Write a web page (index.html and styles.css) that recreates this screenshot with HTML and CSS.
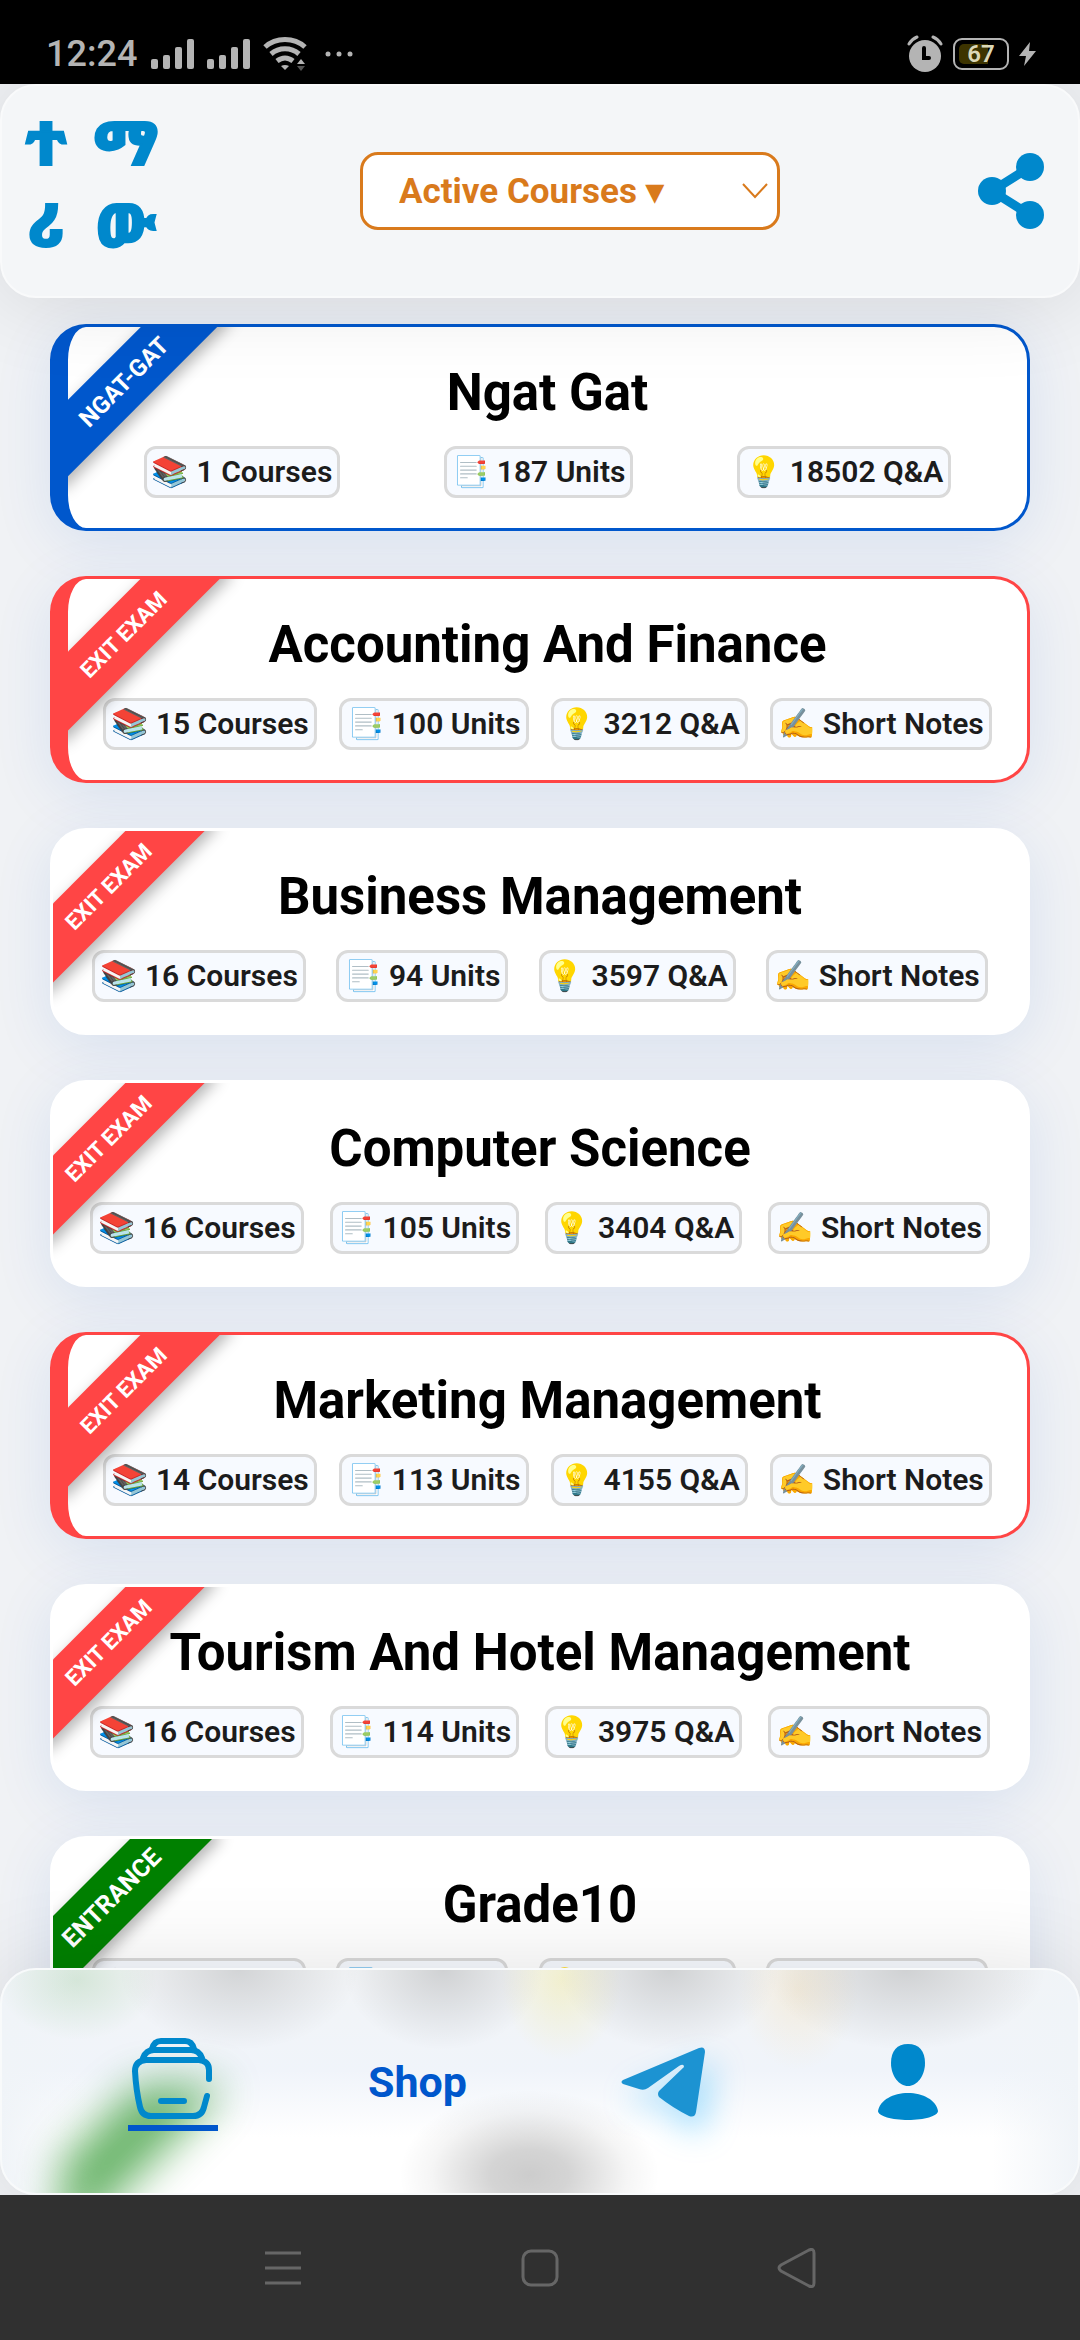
FILE: index.html
```html
<!DOCTYPE html>
<html lang="en">
<head>
    <meta charset="UTF-8">
    <meta name="viewport" content="width=device-width, initial-scale=1.0">
    <title>Courses</title>
    <link rel="stylesheet" href="styles.css">
</head>
<body>
    <div class="status-bar">
        <div class="status-group">
            <span class="clock">12:24</span>
            <svg class="signal" width="44" height="30" viewBox="0 0 44 30" fill="currentColor">
                <rect x="0" y="20" width="7" height="10" rx="2"/>
                <rect x="12" y="16" width="7" height="14" rx="2"/>
                <rect x="24" y="8" width="7" height="22" rx="2"/>
                <rect x="36" y="0" width="7" height="30" rx="2"/>
            </svg>
            <svg class="signal" width="44" height="30" viewBox="0 0 44 30" fill="currentColor">
                <rect x="0" y="20" width="7" height="10" rx="2"/>
                <rect x="12" y="16" width="7" height="14" rx="2"/>
                <rect x="24" y="8" width="7" height="22" rx="2"/>
                <rect x="36" y="0" width="7" height="30" rx="2"/>
            </svg>
            <svg class="wifi" width="44" height="34" viewBox="0 0 44 34" fill="none" stroke="currentColor" stroke-width="5">
                <path d="M2 10C13 0 31 0 42 10"/>
                <path d="M8 17C16 10 28 10 36 17"/>
                <path d="M14 24C19 20 25 20 30 24"/>
                <path d="M18 29Q22 27 26 29L22 33Z" fill="currentColor" stroke="none"/>
                <path d="M34 27L38 22L42 27Z" fill="currentColor" stroke="none"/>
                <path d="M34 29L38 34L42 29Z" fill="#555" stroke="none"/>
            </svg>
            <svg class="dots" width="28" height="6" viewBox="0 0 28 6" fill="currentColor">
                <circle cx="3" cy="3" r="2.5"/><circle cx="14" cy="3" r="2.5"/><circle cx="25" cy="3" r="2.5"/>
            </svg>
        </div>
        <div class="status-group status-right">
            <svg width="36" height="38" viewBox="0 0 36 38" fill="none" stroke="currentColor" stroke-width="3" stroke-linecap="round">
                <circle cx="18" cy="21" r="16" fill="currentColor" stroke="none"/>
                <path d="M2 9Q5 4 10 2M26 2Q31 4 34 9"/>
                <path d="M17 13V23H22" stroke="#000" stroke-width="4"/>
            </svg>
            <span class="battery"><span class="battery-level">67</span></span>
            <svg class="bolt" width="17" height="24" viewBox="0 0 17 24" fill="currentColor">
                <path d="M11 0L0 14H7L5 24L17 9H10Z"/>
            </svg>
        </div>
    </div>

    <div class="app">
        <header class="header">
            <a class="logo" href="#" lang="am">
                <span>ተ</span><span>ማ</span>
                <span>ሪ</span><span>ው</span>
            </a>
            <div class="filter">
                <select class="filter-select" aria-label="Course filter">
                    <option>Active Courses ▾</option>
                </select>
                <svg class="filter-arrow" width="26" height="16" viewBox="0 0 26 16" fill="none" stroke="currentColor" stroke-width="2">
                    <path d="M1 1L13 14L25 1"/>
                </svg>
            </div>
            <button class="share" type="button" aria-label="Share">
                <svg width="66" height="76" viewBox="0 0 66 76" fill="currentColor">
                    <path d="M52 14L14 38L52 62" fill="none" stroke="currentColor" stroke-width="9"/>
                    <circle cx="52" cy="14" r="14"/>
                    <circle cx="14" cy="38" r="14"/>
                    <circle cx="52" cy="62" r="14"/>
                </svg>
            </button>
        </header>

        <main class="courses">
            <section class="card owned ngat">
                <div class="ribbon">NGAT-GAT</div>
                <h2>Ngat Gat</h2>
                <div class="stats">
                    <span>📚 1 Courses</span>
                    <span>📑 187 Units</span>
                    <span>💡 18502 Q&amp;A</span>
                </div>
            </section>
            <section class="card owned exit">
                <div class="ribbon">EXIT EXAM</div>
                <h2>Accounting And Finance</h2>
                <div class="stats">
                    <span>📚 15 Courses</span>
                    <span>📑 100 Units</span>
                    <span>💡 3212 Q&amp;A</span>
                    <span>✍️ Short Notes</span>
                </div>
            </section>
            <section class="card exit">
                <div class="ribbon">EXIT EXAM</div>
                <h2>Business Management</h2>
                <div class="stats">
                    <span>📚 16 Courses</span>
                    <span>📑 94 Units</span>
                    <span>💡 3597 Q&amp;A</span>
                    <span>✍️ Short Notes</span>
                </div>
            </section>
            <section class="card exit">
                <div class="ribbon">EXIT EXAM</div>
                <h2>Computer Science</h2>
                <div class="stats">
                    <span>📚 16 Courses</span>
                    <span>📑 105 Units</span>
                    <span>💡 3404 Q&amp;A</span>
                    <span>✍️ Short Notes</span>
                </div>
            </section>
            <section class="card owned exit">
                <div class="ribbon">EXIT EXAM</div>
                <h2>Marketing Management</h2>
                <div class="stats">
                    <span>📚 14 Courses</span>
                    <span>📑 113 Units</span>
                    <span>💡 4155 Q&amp;A</span>
                    <span>✍️ Short Notes</span>
                </div>
            </section>
            <section class="card exit">
                <div class="ribbon">EXIT EXAM</div>
                <h2>Tourism And Hotel Management</h2>
                <div class="stats">
                    <span>📚 16 Courses</span>
                    <span>📑 114 Units</span>
                    <span>💡 3975 Q&amp;A</span>
                    <span>✍️ Short Notes</span>
                </div>
            </section>
            <section class="card entrance">
                <div class="ribbon">ENTRANCE</div>
                <h2>Grade10</h2>
                <div class="stats">
                    <span>📚 12 Courses</span>
                    <span>📑 84 Units</span>
                    <span>💡 3120 Q&amp;A</span>
                    <span>✍️ Short Notes</span>
                </div>
            </section>
        </main>

        <nav class="bottom-nav">
            <a class="active" href="#" aria-label="My courses">
                <svg width="82" height="82" viewBox="0 0 82 82" fill="none" stroke="currentColor" stroke-width="6" stroke-linecap="round" stroke-linejoin="round">
                    <path d="M77 41V32Q77 23 67 22H14Q3 23 3 33Q4 52 8 69Q10 78 19 78H61Q70 78 72 69L75 58"/>
                    <path d="M11 20Q14 12 22 12H59Q67 12 70 20"/>
                    <path d="M20 11Q22 3 29 3H53Q60 3 62 11"/>
                    <path d="M29 63H52"/>
                </svg>
            </a>
            <a class="shop" href="#">Shop</a>
            <a class="telegram" href="#" aria-label="Telegram">
                <svg width="84" height="70" viewBox="0 0 84 70" fill="currentColor">
                    <path d="M2 33L78 1Q84 -1 84 5L75 65Q74 71 68 69Q52 61 38 50Q36 47 38 44L63 20Q63 16 58 19L27 41Q23 44 18 42L2 37Q-1 35 2 33Z"/>
                </svg>
            </a>
            <a href="#" aria-label="Profile">
                <svg width="60" height="76" viewBox="0 0 60 76" fill="currentColor">
                    <path d="M30 0C41 0 47 7 47 19C47 32 39 42 30 42C21 42 13 32 13 19C13 7 19 0 30 0Z"/>
                    <path d="M0 67C2 56 15 49 30 49C45 49 58 56 60 67C60 72 46 76 30 76C14 76 0 72 0 67Z"/>
                </svg>
            </a>
        </nav>
    </div>

    <div class="system-nav">
        <button type="button" aria-label="Recent apps">
            <svg width="40" height="40" viewBox="0 0 40 40" fill="none" stroke="currentColor" stroke-width="3">
                <path d="M2 5H38M2 20H38M2 35H38"/>
            </svg>
        </button>
        <button type="button" aria-label="Home">
            <svg width="40" height="40" viewBox="0 0 40 40" fill="none" stroke="currentColor" stroke-width="3">
                <rect x="3" y="3" width="34" height="34" rx="8"/>
            </svg>
        </button>
        <button type="button" aria-label="Back">
            <svg width="40" height="40" viewBox="0 0 40 40" fill="none" stroke="currentColor" stroke-width="3">
                <path d="M4 17L32 2Q37 0 37 5V35Q37 40 32 38L4 23Q0 20 4 17Z"/>
            </svg>
        </button>
    </div>
</body>
</html>
```

FILE: styles.css
```css
* {
    box-sizing: border-box;
}
body {
    margin: 0;
    height: 100vh;
    display: flex;
    flex-direction: column;
    overflow: hidden;
    font-family: Roboto, "Noto Sans", "Noto Color Emoji", sans-serif;
    background-color: #f0f2f5;
}
svg {
    display: block;
}
button {
    border: none;
    padding: 0;
    background: none;
    color: inherit;
    cursor: pointer;
}
a {
    color: inherit;
    text-decoration: none;
}

/* phone status bar */
.status-bar {
    display: flex;
    justify-content: space-between;
    height: 84px;
    padding: 24px 44px 0 46px;
    background-color: #000;
    color: #b4b4b4;
}
.status-group {
    display: flex;
    align-items: center;
    gap: 12px;
    height: 60px;
}
.clock {
    margin-right: 2px;
    font-size: 36px;
    font-weight: 500;
}
.dots {
    margin-left: 6px;
}
.status-right {
    gap: 10px;
}
.battery {
    width: 56px;
    height: 32px;
    padding: 4px;
    border: 2px solid #b4b4b4;
    border-radius: 9px;
}
.battery-level {
    display: block;
    height: 20px;
    border-radius: 5px;
    background: linear-gradient(to right, #3d3400 67%, transparent 67%);
    color: #dcd8b8;
    font-size: 24px;
    font-weight: 600;
    line-height: 20px;
    text-align: center;
}

.app {
    position: relative;
    flex: 1;
    min-height: 0;
    overflow: hidden;
}
.header {
    position: relative;
    z-index: 2;
    display: flex;
    align-items: center;
    justify-content: space-between;
    height: 214px;
    padding: 0 34px 0 24px;
    border: 2px solid #f9fafb;
    border-radius: 36px;
    background-color: #f4f6f8;
    box-shadow: 0 0 90px rgba(0, 0, 0, 0.12);
    color: #0088cc;
}
.logo {
    display: grid;
    grid-template-columns: 40px 72px;
    column-gap: 24px;
    padding-bottom: 16px;
    font-family: "Noto Sans Ethiopic", "Noto Serif Ethiopic", "Abyssinica SIL", "Noto Sans", sans-serif;
    font-size: 60px;
    font-weight: 900;
    line-height: 82px;
    -webkit-text-stroke: 2px #0088cc;
}
.logo span {
    display: flex;
    justify-content: center;
}
.filter {
    position: relative;
    color: #d97a1c;
}
.filter-select {
    appearance: none;
    width: 420px;
    height: 78px;
    padding: 0 36px;
    border: 3px solid #d97a1c;
    border-radius: 18px;
    background-color: #fff;
    color: inherit;
    font-family: inherit;
    font-size: 35px;
    font-weight: 700;
}
.filter-arrow {
    position: absolute;
    top: 31px;
    right: 12px;
    pointer-events: none;
}

.courses {
    display: flex;
    flex-direction: column;
    gap: 45px;
    padding: 26px 50px;
}
.card {
    position: relative;
    flex-shrink: 0;
    overflow: hidden;
    padding: 36px 24px 30px;
    border: 3px solid #fff;
    border-radius: 36px;
    background-color: #fff;
    box-shadow: 0 12px 60px rgba(0, 80, 200, 0.1);
}
.card h2 {
    margin: 0 0 23px;
    color: #000;
    font-size: 51px;
    font-weight: 700;
    line-height: 60px;
    text-align: center;
}
.stats {
    display: flex;
    justify-content: space-around;
}
.stats span {
    height: 52px;
    padding: 0 5px;
    border: 3px solid #dadada;
    border-radius: 12px;
    background-color: #f7faff;
    color: #1c1c1c;
    font-size: 30px;
    font-weight: 600;
    line-height: 46px;
    white-space: nowrap;
}
.ribbon {
    position: absolute;
    top: 28px;
    left: -64px;
    width: 240px;
    transform: rotate(-45deg);
    box-shadow: 0 6px 15px rgba(0, 0, 0, 0.3);
    color: #fff;
    font-size: 22px;
    font-weight: 700;
    line-height: 56px;
    text-align: center;
}
.exit .ribbon {
    background-color: #ff4545;
}
.ngat .ribbon {
    background-color: #0057cc;
    font-size: 24px;
    line-height: 54px;
}
.entrance .ribbon {
    top: 30px;
    left: -61px;
    background-color: #008000;
    font-size: 25px;
    line-height: 58px;
}
.owned {
    border-left-width: 18px;
}
.owned.ngat {
    border-color: #0057cc;
}
.owned.exit {
    border-color: #ff4545;
}

/* frosted glass menu */
.bottom-nav {
    position: absolute;
    right: 0;
    bottom: 0;
    left: 0;
    isolation: isolate;
    overflow: hidden;
    display: grid;
    grid-template-columns: repeat(4, 1fr);
    align-items: center;
    justify-items: center;
    height: 227px;
    padding: 0 48px;
    border: 2px solid #f8fafb;
    border-radius: 36px;
    background:
        radial-gradient(80px 60px at 7% 10px, rgba(0, 128, 0, 0.12), transparent),
        radial-gradient(60px 80px at 52% 10px, rgba(240, 225, 90, 0.25), transparent),
        radial-gradient(60px 80px at 74% 20px, rgba(250, 205, 120, 0.2), transparent),
        linear-gradient(to right, #f0f4f8 0, rgba(240, 244, 248, 0) 8%, rgba(240, 244, 248, 0) 92%, #f0f4f8 100%),
        linear-gradient(#f2f4f6, #f0f4fa 45%, #fff 75%);
    box-shadow: 0 0 90px rgba(0, 0, 0, 0.12);
    color: #0088cc;
    font-size: 43px;
    font-weight: 700;
}
/* blurred ribbon of the next card */
.bottom-nav::before {
    content: "";
    position: absolute;
    z-index: -1;
    top: 116px;
    left: 60px;
    width: 160px;
    height: 160px;
    background: linear-gradient(135deg, transparent 54px, #008000 54px, #008000 116px, transparent 116px);
    opacity: 0.6;
    filter: blur(22px);
}
/* blurred stats and title */
.bottom-nav::after {
    content: "";
    position: absolute;
    z-index: -1;
    inset: 0;
    background:
        radial-gradient(120px 80px at 22% 0, rgba(0, 0, 0, 0.13), transparent),
        radial-gradient(100px 80px at 41% 0, rgba(0, 0, 0, 0.14), transparent),
        radial-gradient(110px 80px at 62% 0, rgba(0, 0, 0, 0.14), transparent),
        radial-gradient(140px 80px at 84% 0, rgba(0, 0, 0, 0.14), transparent),
        radial-gradient(130px 85px at 49% 205px, rgba(0, 0, 0, 0.2), rgba(0, 0, 0, 0.17) 30%, rgba(0, 0, 0, 0.04) 75%, transparent);
}
.shop {
    color: #0057cc;
}
.bottom-nav .active {
    padding: 6px 4px 5px;
    border-bottom: 6px solid #0057cc;
}
.telegram svg {
    color: #1c93d2;
    filter: drop-shadow(8px 16px 16px rgba(0, 170, 255, 0.35));
    overflow: visible;
}

/* android buttons */
.system-nav {
    display: flex;
    align-items: center;
    justify-content: center;
    gap: 217px;
    height: 145px;
    background-color: #303030;
    color: #666;
}
```
